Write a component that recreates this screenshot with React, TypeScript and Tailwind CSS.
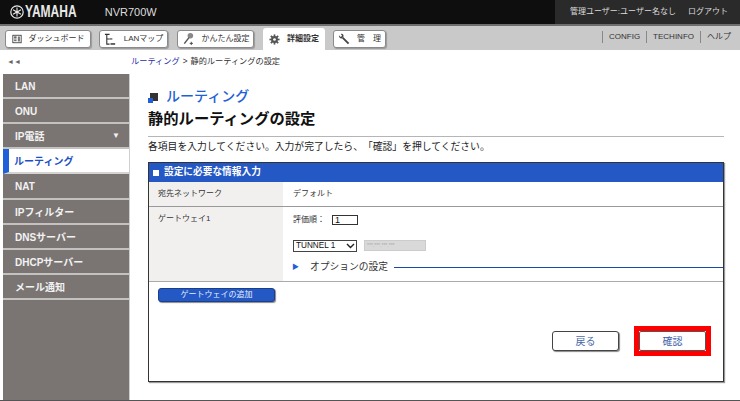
import { ReactNode } from "react";

const jp = "font-['Liberation_Sans','Noto_Sans_CJK_JP',sans-serif]";

const sideItems = [
  { label: "LAN", h: "h-[25px]" },
  { label: "ONU", h: "h-[25px]" },
  { label: "IP電話", h: "h-[25px]", arrow: true },
  { label: "ルーティング", h: "h-[25px]", active: true },
  { label: "NAT", h: "h-[26px]" },
  { label: "IPフィルター", h: "h-[25px]" },
  { label: "DNSサーバー", h: "h-[25px]" },
  { label: "DHCPサーバー", h: "h-[25px]" },
  { label: "メール通知", h: "h-[25px]" },
];

function YamahaMark() {
  return (
    <svg width="14" height="14" viewBox="0 0 14 14" className="shrink-0">
      <circle cx="7" cy="7" r="6.2" fill="none" stroke="#e8e8e8" strokeWidth="1.2" />
      <g stroke="#e8e8e8" strokeWidth="1.1">
        <line x1="7" y1="2.5" x2="7" y2="11.5" />
        <line x1="3" y1="4.7" x2="11" y2="9.3" />
        <line x1="3" y1="9.3" x2="11" y2="4.7" />
      </g>
      <circle cx="7" cy="7" r="1.3" fill="#e8e8e8" />
    </svg>
  );
}

function DashIcon() {
  return (
    <svg width="10" height="10" viewBox="0 0 12 12">
      <rect x="1" y="1.5" width="10" height="9" fill="none" stroke="#333" />
      <rect x="2.5" y="3" width="3" height="1.5" fill="#333" />
      <line x1="2.5" y1="6" x2="5.5" y2="6" stroke="#333" />
      <line x1="2.5" y1="8" x2="5.5" y2="8" stroke="#333" />
      <rect x="7" y="3" width="2.5" height="6" fill="#777" />
    </svg>
  );
}

function MapIcon() {
  return (
    <svg width="13" height="13" viewBox="0 0 14 14">
      <path d="M1 1.5H6M3 1.5V12H6M3 6.5H6" fill="none" stroke="#333" strokeWidth="1.2" />
      <rect x="7" y="11" width="5" height="1.6" fill="#333" />
      <rect x="6" y="5.7" width="3" height="1.4" fill="#555" />
    </svg>
  );
}

function WizardIcon() {
  return (
    <svg width="13" height="14" viewBox="0 0 14 15">
      <circle cx="9" cy="4" r="3" fill="#888" />
      <path d="M7.5 6L2.5 12.5" stroke="#555" strokeWidth="1.6" />
      <path d="M10 10.5V14M8.3 12.2H11.8" stroke="#444" strokeWidth="1" />
    </svg>
  );
}

function GearIcon() {
  return (
    <svg width="11" height="11" viewBox="0 0 13 13">
      <g stroke="#555" strokeWidth="2">
        <line x1="6.5" y1="0.5" x2="6.5" y2="12.5" />
        <line x1="0.5" y1="6.5" x2="12.5" y2="6.5" />
        <line x1="2.2" y1="2.2" x2="10.8" y2="10.8" />
        <line x1="2.2" y1="10.8" x2="10.8" y2="2.2" />
      </g>
      <circle cx="6.5" cy="6.5" r="4" fill="#555" />
      <circle cx="6.5" cy="6.5" r="1.6" fill="#fff" />
    </svg>
  );
}

function WrenchIcon() {
  return (
    <svg width="12" height="12" viewBox="0 0 13 13">
      <path d="M5 5L11.5 11.5" stroke="#444" strokeWidth="2" />
      <path d="M1 2.5L3 4.2L4.5 3L3 1C4.5 0.3 6.3 1.5 6 3.8L4 6C2.3 6.2 0.8 4.5 1 2.5Z" fill="#444" />
    </svg>
  );
}

function Tab({ icon, label, width, gap }: { icon: ReactNode; label: string; width: string; gap: string }) {
  return (
    <div
      className={`flex items-center justify-center gap-[7px] h-[18px] rounded-[3px] border border-[#8a8a8a] bg-white shadow-[1px_1px_1px_#999] text-[8px] text-[#333] whitespace-nowrap ${width} ${gap}`}
    >
      {icon}
      <span>{label}</span>
    </div>
  );
}

export default function App() {
  return (
    <div className={`w-[740px] h-[401px] overflow-hidden flex flex-col bg-white ${jp}`}>
      {/* header */}
      <div className="h-[24px] shrink-0 bg-[#0e0e0e] flex items-stretch">
        <div className="flex items-center flex-1 pl-[10px]">
          <YamahaMark />
          <span className="ml-[1px] text-[16px] font-bold text-[#e8e8e8] scale-x-[0.75] origin-left">YAMAHA</span>
          <span className="ml-[11px] text-[11px] text-[#dddddd]">NVR700W</span>
        </div>
        <div className="w-[185px] bg-[#2a2a2a] flex items-center pl-[15px] text-[8px] text-[#dcdcdc] gap-[12px] whitespace-nowrap">
          <span>管理ユーザー:ユーザー名なし</span>
          <span>ログアウト</span>
        </div>
      </div>
      {/* tabs */}
      <div className="h-[26px] shrink-0 bg-[#c9c9c9] border-t-2 border-[#6e6e6e] flex items-start pl-[5px] pt-[4px]">
        <Tab icon={<DashIcon />} label="ダッシュボード" width="w-[86px]" gap="mr-[8px]" />
        <Tab icon={<MapIcon />} label="LANマップ" width="w-[69px]" gap="mr-[9px]" />
        <Tab icon={<WizardIcon />} label="かんたん設定" width="w-[77px]" gap="mr-[9px]" />
        <div className="-mt-[2px] w-[62px] h-[22px] mr-[8px] rounded-t-[3px] bg-white flex items-center justify-center gap-[7px] text-[8px] font-bold text-[#333] whitespace-nowrap">
          <GearIcon />
          <span>詳細設定</span>
        </div>
        <Tab icon={<WrenchIcon />} label="管　理" width="w-[53px]" gap="" />
        <div className="ml-auto mt-[1px] mr-[9px] flex items-center h-[11px] text-[8px] text-[#333] whitespace-nowrap">
          <span className="border-l border-[#888] pl-[6px] pr-[6px]">CONFIG</span>
          <span className="border-l border-[#888] pl-[6px] pr-[6px]">TECHINFO</span>
          <span className="border-l border-[#888] pl-[6px]">ヘルプ</span>
        </div>
      </div>
      {/* body */}
      <div className="flex-1 flex min-h-0 border-b border-[#555]">
        {/* sidebar */}
        <div className="w-[130px] shrink-0 pl-[3px] flex flex-col">
          <div className="h-[24px] shrink-0 pl-[4px] pt-[8px] text-[7px] leading-[8px] text-[#666]">◄◄</div>
          <div className="flex-1 bg-[#7a7572] flex flex-col border-r border-[#cfcfcf]">
            {sideItems.map((item) => (
              <div
                key={item.label}
                className={`${item.h} shrink-0 flex items-center pt-[1px] text-[10px] font-bold border-b-2 ${
                  item.active
                    ? "bg-white text-[#1d50c0] border-l-[6px] border-l-[#1f5fd8] border-b-[#d5d3d1] pl-[5px]"
                    : "text-[#f2f2f2] border-[#c4c2c0] pl-[12px]"
                }`}
              >
                <span className="flex-1">{item.label}</span>
                {item.arrow && <span className="mr-[9px] text-[8px]">▼</span>}
              </div>
            ))}
          </div>
        </div>
        {/* main */}
        <div className="flex-1 min-w-0 flex flex-col">
          <div className="h-[20px] shrink-0 pl-[1px] pt-[5px] flex items-center text-[8.2px] text-[#333]">
            <span className="text-[#1f2fa8]">ルーティング</span>
            <span className="mx-[3px]">&gt;</span>
            <span>静的ルーティングの設定</span>
          </div>
          <div className="pl-[18px] pr-[16px] flex-1 flex flex-col">
            <div className="mt-[16px] flex items-center h-[20px]">
              <svg width="10" height="10" viewBox="0 0 10 10" className="mt-[3px]">
                <rect x="2" y="0" width="8" height="8" fill="#333" />
                <rect x="0" y="5" width="5" height="5" fill="#1f5fd8" />
              </svg>
              <span className="ml-[8px] text-[14px] leading-[20px] text-[#1f5fd8] font-medium">ルーティング</span>
            </div>
            <div className="mt-[3px] pb-[7px] border-b border-[#b5b5b5] text-[15.3px] leading-[20px] font-bold text-[#111]">
              静的ルーティングの設定
            </div>
            <div className="mt-[3px] text-[9.8px] leading-[14px] text-[#222] [text-spacing-trim:space-all] whitespace-nowrap">
              各項目を入力してください。入力が完了したら、「確認」を押してください。
            </div>
            {/* panel */}
            <div className="mt-[8px] h-[220px] border border-[#333] shadow-[1px_1px_1px_#999] flex flex-col">
              <div className="h-[19px] shrink-0 bg-[#2458c4] flex items-center pl-[4px] text-[9.7px] font-bold text-white">
                <span className="w-[6px] h-[6px] bg-white mr-[5px]" />
                設定に必要な情報入力
              </div>
              <div className="flex h-[25px] shrink-0 border-b border-[#999] text-[8px] text-[#333]">
                <div className="w-[134px] bg-[#f1f0ef] pl-[9px] flex items-center">宛先ネットワーク</div>
                <div className="pl-[10px] flex items-center">デフォルト</div>
              </div>
              <div className="flex h-[75px] shrink-0 border-b border-[#aaa] text-[8px] text-[#333]">
                <div className="w-[134px] bg-[#f1f0ef] pl-[9px] pt-[6px]">ゲートウェイ1</div>
                <div className="flex-1 pl-[10px] flex flex-col">
                  <div className="mt-[7px] flex items-center h-[12px]">
                    <span className="w-[36px] shrink-0">評価順：</span>
                    <div className="ml-[3px] w-[26px] h-[10px] border border-[#333] bg-white text-[9px] leading-[9px] pl-[2px] text-[#111]">1</div>
                  </div>
                  <div className="mt-[13px] flex items-center h-[13px]">
                    <div className="w-[64px] h-[12px] border border-[#444] bg-white pl-[2px] text-[8.2px] leading-[11px] text-[#111] flex items-center justify-between pr-[1px] whitespace-nowrap">
                      <span>TUNNEL 1</span>
                      <svg width="9" height="6" viewBox="0 0 9 6">
                        <path d="M1 1L4.5 4.5L8 1" fill="none" stroke="#222" strokeWidth="1.4" />
                      </svg>
                    </div>
                    <div className="ml-[7px] w-[62px] h-[11px] bg-[#d9d9d9] border border-[#ccc] text-[5px] leading-[9px] pl-[2px] text-[#aaa] whitespace-nowrap">***.***.***.***</div>
                  </div>
                  <div className="mt-[8px] flex items-center h-[14px]">
                    <span className="text-[#1f5fd8] text-[7px] ml-[-1px]">▶</span>
                    <span className="ml-[11px] text-[9.75px] text-[#333]">オプションの設定</span>
                    <div className="ml-[6px] flex-1 border-t border-[#1a47a8]" />
                  </div>
                </div>
              </div>
              <div className="pl-[9px] pt-[6px]">
                <div className="w-[117px] h-[14px] rounded-[3px] bg-[#2458c4] border border-[#1c3f8a] shadow-[1px_1px_1px_#888] flex items-center justify-center text-[8px] text-[#e8eeff]">
                  ゲートウェイの追加
                </div>
              </div>
              <div className="mt-[24px] flex items-center justify-end pr-[12px]">
                <div className="w-[67px] h-[20px] rounded-[3px] border border-[#444] bg-white shadow-[1px_1px_1px_#888] flex items-center justify-center text-[10px] text-[#4a6aa8]">
                  戻る
                </div>
                <div className="ml-[15px] border-[5px] border-[#ff0000]">
                  <div className="w-[67px] h-[20px] rounded-[2px] border border-[#555] bg-white flex items-center justify-center text-[10px] text-[#3f5fa8]">
                    確認
                  </div>
                </div>
              </div>
            </div>
          </div>
        </div>
      </div>
    </div>
  );
}
